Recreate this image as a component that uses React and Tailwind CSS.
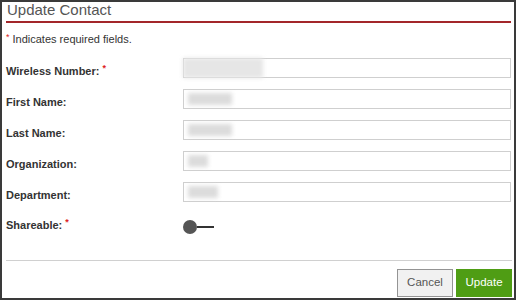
import React from 'react';

const FIELDS = [
  { label: 'Wireless Number:', required: true },
  { label: 'First Name:', blur: 'w-[44px]' },
  { label: 'Last Name:', blur: 'w-[44px]' },
  { label: 'Organization:', blur: 'w-[20px]' },
  { label: 'Department:', blur: 'w-[30px]' },
];

function Star() {
  return <span className="text-[#d22] text-[9px] ml-[3px] relative -top-[4px]">*</span>;
}

export default function App() {
  return (
    <div
      className="w-[516px] h-[300px] bg-white border-2 border-[#3a3a3a] flex flex-col text-[#333]"
      style={{ fontFamily: '"Liberation Sans", Arial, sans-serif' }}
    >
      {/* Header */}
      <div className="ml-[4px] mr-[3px] h-[21px] border-b-2 border-[#a3262a]">
        <h1 className="text-[15px] leading-[16px] pl-[1px] text-[#555]">Update Contact</h1>
      </div>

      <p className="mx-[4px] mt-[10px] text-[11px] leading-[13px]">
        <span className="text-[#d22] text-[9px] relative -top-[3px] mr-[3px]">*</span>
        Indicates required fields.
      </p>

      {/* Fields */}
      <div className="ml-[4px] mr-[3px] mt-[11px] flex flex-col">
        {FIELDS.map((f) => (
          <div key={f.label} className="flex items-start h-[31px]">
            <label className="w-[177px] text-[11px] leading-[13px] font-bold pt-[7px]">
              {f.label}
              {f.required && <Star />}
            </label>
            <div className="relative flex-1 h-[20px] border border-[#cfcfcf] flex items-center px-[4px]">
              {f.required ? (
                <div className="absolute -left-[1px] -top-[1px] w-[80px] h-[20px] bg-[#e6e6e6] blur-[2px]" />
              ) : (
                <div className={`${f.blur} h-[12px] bg-[#dcdcdc] blur-[2px]`} />
              )}
            </div>
          </div>
        ))}

        <div className="flex items-start mt-[6px]">
          <label className="w-[177px] text-[11px] leading-[13px] font-bold">
            Shareable:
            <Star />
          </label>
          <div className="flex items-center mt-[1px]">
            <span className="w-[14px] h-[14px] rounded-full bg-[#555]" />
            <span className="w-[17px] h-[2px] bg-[#333]" />
          </div>
        </div>
      </div>

      {/* Footer */}
      <div className="mt-auto ml-[4px] mr-[2px] border-t border-[#d0d0d0] flex justify-end gap-[3px] pt-[8px] pb-[1px]">
        <button className="w-[56px] h-[28px] bg-[#f1f1f1] border border-[#949494] text-[#555] text-[11.5px]">
          Cancel
        </button>
        <button className="w-[56px] h-[28px] bg-[#4f9d14] text-white text-[11.5px]">
          Update
        </button>
      </div>
    </div>
  );
}
